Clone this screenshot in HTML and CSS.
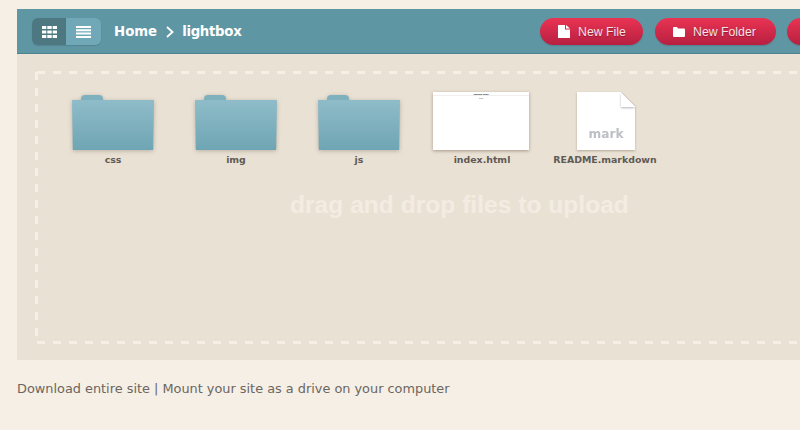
FILE: index.html
```html
<!DOCTYPE html>
<html lang="en">
<head>
<meta charset="utf-8">
<title>lightbox</title>
<link rel="stylesheet" href="styles.css">
</head>
<body>
<main class="browser">
  <header class="toolbar">
    <div class="view-toggle">
      <button class="view active" aria-label="Grid view">
        <svg width="15" height="12" viewBox="0 0 15 12"><path fill="#fff" d="M0 0h4.300v3H0zM5.300 0h4.400v3H5.300zM10.700 0H15v3h-4.300zM0 4.500h4.300v3H0zM5.300 4.500h4.400v3H5.300zM10.700 4.500H15v3h-4.300zM0 9h4.300v3H0zM5.300 9h4.400v3H5.300zM10.700 9H15v3h-4.300z"/></svg>
      </button>
      <button class="view" aria-label="List view">
        <svg width="15" height="12" viewBox="0 0 15 12"><path fill="#fff" d="M0 0h15v2H0zM0 3.300h15v2H0zM0 6.600h15v2H0zM0 10h15v2H0z"/></svg>
      </button>
    </div>
    <nav class="crumbs">
      <span>Home</span>
      <svg class="chev" width="8" height="12" viewBox="0 0 8 12"><path fill="none" stroke="#fff" stroke-width="1.800" d="M1 1l5.500 5L1 11"/></svg>
      <span class="current">lightbox</span>
    </nav>
    <div class="actions">
      <button class="btn">
        <svg width="12" height="13" viewBox="0 0 12 13"><path fill="#fff" d="M0 0h7v4.500h5V13H0zM8 0l4 3.500H8z"/></svg>
        New File
      </button>
      <button class="btn">
        <svg width="12" height="10" viewBox="0 0 12 10"><path fill="#fff" d="M0 1q0-1 1-1h3l1 1.500h6q1 0 1 1V9q0 1-1 1H1q-1 0-1-1z"/></svg>
        New Folder
      </button>
      <button class="btn btn-more" aria-label="Upload"></button>
    </div>
  </header>
  <section class="stage">
    <div class="drop">
      <ul class="tiles">
        <li class="tile">
          <div class="thumb"><div class="folder"></div></div>
          <span class="name">css</span>
        </li>
        <li class="tile">
          <div class="thumb"><div class="folder"></div></div>
          <span class="name">img</span>
        </li>
        <li class="tile">
          <div class="thumb"><div class="folder"></div></div>
          <span class="name">js</span>
        </li>
        <li class="tile">
          <div class="thumb">
            <div class="page-preview">
              <span class="pv-title">lightbox demo</span>
              <span class="pv-sub">text</span>
            </div>
          </div>
          <span class="name">index.html</span>
        </li>
        <li class="tile">
          <div class="thumb">
            <div class="doc"><span class="doc-ext">mark</span></div>
          </div>
          <span class="name">README.markdown</span>
        </li>
      </ul>
      <p class="hint">drag and drop files to upload</p>
    </div>
  </section>
</main>
<footer class="foot">Download entire site | Mount your site as a drive on your computer</footer>
</body>
</html>
```
FILE: styles.css
```css
* { box-sizing: border-box; }
html, body { margin: 0; height: 100%; }
body {
  background: #f6efe6;
  overflow: hidden;
  padding: 9px 0 0 17px;
  width: 1000px;
  font-family: "DejaVu Sans", sans-serif;
}
.browser { width: 900px; }
.toolbar {
  height: 45px;
  padding: 9px 0 0 15px;
  background: #5f96a3;
  border-bottom: 1px solid #4f8290;
  display: flex;
  align-items: flex-start;
}
.view-toggle {
  display: flex;
  width: 69px;
  height: 27px;
  border-radius: 6px;
  overflow: hidden;
  box-shadow: 0 1px 1px rgba(60, 90, 100, .3);
}
.view {
  border: 0;
  padding: 0;
  width: 35px;
  height: 27px;
  background: #71a8b8;
  display: flex;
  align-items: center;
  justify-content: center;
}
.view.active { background: #4d7882; width: 34px; }
.crumbs {
  margin-left: 13px;
  height: 27px;
  display: flex;
  align-items: center;
  gap: 8px;
  color: #fff;
  font-weight: bold;
  font-size: 13.300px;
  width: 127px;
  flex: none;
}
.chev { margin-left: 1px; flex: none; }
.current { letter-spacing: -.3px; white-space: nowrap; }
.actions { margin-left: 299px; display: flex; gap: 12px; }
.btn {
  height: 27px;
  border: 0;
  border-radius: 14px;
  background: linear-gradient(#ea3353, #b72040);
  color: #f7e3e3;
  font: 12.300px "Liberation Sans", sans-serif;
  text-shadow: 0 1px 1px rgba(110, 10, 50, .6);
  display: flex;
  align-items: center;
  justify-content: flex-start;
  gap: 8px;
  padding: 0 0 0 18px;
  width: 103px;
  box-shadow: 0 1px 1px rgba(60, 60, 70, .25);
  white-space: nowrap;
}
.btn:nth-child(2) { width: 121px; }
.btn-more { margin-left: -1px; }
.stage {
  height: 306px;
  padding: 17px 0 16px 18px;
  background: #e9e1d4;
}
.drop {
  height: 273px;
  position: relative;
  background-color: transparent;
  background-image:
    repeating-linear-gradient(90deg, transparent 0 2px, #f6efe6 2px 10px, transparent 10px 16px),
    repeating-linear-gradient(90deg, transparent 0 2px, #f6efe6 2px 10px, transparent 10px 16px),
    repeating-linear-gradient(180deg, transparent 0 1px, #f6efe6 1px 9px, transparent 9px 16px);
  background-size: 100% 3px, 100% 3px, 3px 100%;
  background-position: 0 0, 0 100%, 0 0;
  background-repeat: no-repeat;
}
.tiles {
  list-style: none;
  margin: 0;
  padding: 18px 0 0 16.500px;
  display: flex;
}
.tile {
  width: 123px;
  display: flex;
  flex-direction: column;
  align-items: center;
}
.thumb {
  height: 61px;
  display: flex;
  align-items: flex-end;
  justify-content: center;
}
.folder {
  width: 82px;
  height: 50px;
  position: relative;
  filter: drop-shadow(0 1px 2px rgba(90, 80, 70, .35));
}
.folder::before {
  content: "";
  position: absolute;
  left: 9px;
  top: -5px;
  width: 22px;
  height: 5px;
  background: #7fb0bd;
  border-radius: 4px 4px 0 0;
}
.folder::after {
  content: "";
  position: absolute;
  inset: 0;
  background: linear-gradient(#8fbcc9, #6fa5b4);
  clip-path: polygon(0 0, 100% 0, 99% 100%, 1% 100%);
}
.page-preview {
  width: 96px;
  height: 58px;
  margin-right: 2px;
  background: #fff;
  box-shadow: 0 1px 3px rgba(100, 80, 60, .5);
  display: flex;
  flex-direction: column;
  align-items: center;
  color: #222;
  font: bold 2.200px "Liberation Sans", sans-serif;
}
.pv-title {
  width: 100%;
  height: 4px;
  padding-top: 1px;
  text-align: center;
  border-bottom: 1px solid #f1efed;
}
.pv-sub { margin-top: 1px; color: #888; }
.doc {
  width: 58px;
  height: 58px;
  margin-left: 2px;
  background: linear-gradient(225deg, transparent 10px, #fff 10px);
  position: relative;
  filter: drop-shadow(0 1px 1px rgba(100, 80, 60, .4));
  display: flex;
  align-items: flex-end;
  justify-content: center;
}
.doc::before {
  content: "";
  position: absolute;
  top: 0;
  right: 0;
  width: 14px;
  height: 15px;
  background: linear-gradient(45deg, #fff 50%, transparent 50%);
  filter: drop-shadow(0 1px 1px rgba(70, 70, 80, .4));
}
.doc-ext {
  color: #bcbfc5;
  font-weight: bold;
  font-size: 12.200px;
  line-height: 15px;
  margin-bottom: 8px;
}
.name {
  margin-top: 4px;
  font-size: 9.400px;
  line-height: 12px;
  font-weight: bold;
  color: #5f5a55;
  white-space: nowrap;
}
.hint {
  margin: 0;
  position: absolute;
  left: 255px;
  top: 119px;
  color: #f4ece2;
  font: bold 24.600px/30px "Liberation Sans", sans-serif;
  white-space: nowrap;
}
.foot {
  margin-top: 21px;
  font-size: 12.870px;
  line-height: 16px;
  color: #6b665f;
  white-space: nowrap;
}
```
